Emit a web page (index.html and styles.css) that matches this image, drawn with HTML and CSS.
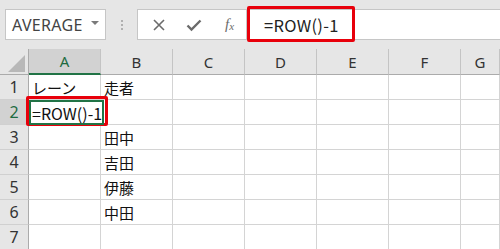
FILE: index.html
```html
<!DOCTYPE html>
<html lang="ja">
<head>
    <meta charset="UTF-8">
    <title>ROW関数</title>
    <link rel="stylesheet" href="styles.css">
</head>
<body>
    <div class="sheet">
        <div class="toolbar">
            <div class="name-box">
                <span class="name-text">AVERAGE</span>
                <span class="name-arrow"></span>
            </div>
            <div class="grip">
                <span></span><span></span><span></span>
            </div>
            <div class="fx-buttons">
                <svg class="icon" width="14" height="14" viewBox="0 0 14 14">
                    <path d="M2 2 L12 12 M12 2 L2 12" stroke="#6b6b6b" stroke-width="1.6" fill="none"/>
                </svg>
                <svg class="icon" width="16" height="14" viewBox="0 0 16 14">
                    <path d="M1.5 7.5 L5.5 11.5 L14.5 2.5" stroke="#6b6b6b" stroke-width="2.4" fill="none"/>
                </svg>
                <span class="fx">f<sub>x</sub></span>
            </div>
            <div class="formula">
                <span class="formula-text">=ROW()-1</span>
            </div>
            <!-- annotation -->
            <div class="mark mark-formula"></div>
        </div>

        <div class="grid">
            <div class="corner"><span class="corner-tri"></span></div>
            <div class="col-head selected">A</div>
            <div class="col-head">B</div>
            <div class="col-head">C</div>
            <div class="col-head">D</div>
            <div class="col-head">E</div>
            <div class="col-head">F</div>
            <div class="col-head">G</div>

            <div class="row-head">1</div>
            <div class="cell">レーン</div>
            <div class="cell">走者</div>
            <div class="cell"></div><div class="cell"></div><div class="cell"></div><div class="cell"></div><div class="cell"></div>

            <div class="row-head selected">2</div>
            <div class="cell active">=ROW()-1<span class="caret"></span></div>
            <div class="cell"></div>
            <div class="cell"></div><div class="cell"></div><div class="cell"></div><div class="cell"></div><div class="cell"></div>

            <div class="row-head">3</div>
            <div class="cell"></div>
            <div class="cell">田中</div>
            <div class="cell"></div><div class="cell"></div><div class="cell"></div><div class="cell"></div><div class="cell"></div>

            <div class="row-head">4</div>
            <div class="cell"></div>
            <div class="cell">吉田</div>
            <div class="cell"></div><div class="cell"></div><div class="cell"></div><div class="cell"></div><div class="cell"></div>

            <div class="row-head">5</div>
            <div class="cell"></div>
            <div class="cell">伊藤</div>
            <div class="cell"></div><div class="cell"></div><div class="cell"></div><div class="cell"></div><div class="cell"></div>

            <div class="row-head">6</div>
            <div class="cell"></div>
            <div class="cell">中田</div>
            <div class="cell"></div><div class="cell"></div><div class="cell"></div><div class="cell"></div><div class="cell"></div>

            <div class="row-head">7</div>
            <div class="cell"></div>
            <div class="cell"></div>
            <div class="cell"></div><div class="cell"></div><div class="cell"></div><div class="cell"></div><div class="cell"></div>
        </div>

        <!-- annotation -->
        <div class="mark mark-cell"></div>
    </div>
</body>
</html>
```

FILE: styles.css
```css
body {
    margin: 0;
    padding: 0;
    background: #fff;
    font-family: 'Noto Sans', 'Noto Sans CJK JP', sans-serif;
    overflow: hidden;
}

.sheet {
    position: relative;
    width: 500px;
    height: 249px;
    overflow: hidden;
}

/* formula bar */

.toolbar {
    position: relative;
    height: 49px;
    box-sizing: border-box;
    padding: 9px 0 0 5px;
    background: #e6e6e6;
    display: flex;
    align-items: flex-start;
}

.name-box {
    width: 101px;
    height: 31px;
    box-sizing: border-box;
    background: #fff;
    border: 1px solid #c6c6c6;
    display: flex;
    align-items: center;
    justify-content: space-between;
    padding: 0 6px 0 6px;
}

.name-text {
    font-size: 16px;
    color: #444;
    letter-spacing: 0.3px;
}

.name-arrow {
    width: 0;
    height: 0;
    border-left: 4px solid transparent;
    border-right: 4px solid transparent;
    border-top: 4px solid #7a7a7a;
    margin-top: -4px;
}

.grip {
    width: 31px;
    height: 31px;
    display: flex;
    flex-direction: column;
    align-items: center;
    justify-content: center;
    gap: 2px;
}

.grip span {
    width: 2px;
    height: 2px;
    background: #b0b0b0;
}

.fx-buttons {
    width: 110px;
    height: 31px;
    box-sizing: border-box;
    background: #fff;
    border: 1px solid #c6c6c6;
    display: flex;
    align-items: center;
    padding-left: 14px;
    gap: 20px;
}

.fx {
    font-family: 'Liberation Serif', serif;
    font-style: italic;
    font-size: 15px;
    color: #6b6b6b;
    margin-left: 3px;
}

.fx sub {
    font-size: 11px;
    vertical-align: -1px;
}

.formula {
    flex: 1;
    height: 31px;
    box-sizing: border-box;
    background: #fff;
    border-top: 1px solid #c6c6c6;
    border-bottom: 1px solid #c6c6c6;
    display: flex;
    align-items: center;
    padding-left: 17px;
}

.formula-text {
    font-family: 'Noto Sans CJK JP', sans-serif;
    font-size: 16.5px;
    letter-spacing: 0.3px;
    color: #222;
}

/* annotation boxes */

.mark {
    position: absolute;
    border: 3px solid #e8000b;
    border-radius: 2px;
    box-sizing: border-box;
}

.mark-formula {
    left: 247px;
    top: 6px;
    width: 108px;
    height: 36px;
}

.mark-cell {
    left: 26px;
    top: 96px;
    width: 82px;
    height: 30px;
}

/* grid */

.grid {
    display: grid;
    grid-template-columns: 29px repeat(6, 72px) 1fr;
    grid-template-rows: 26px;
    grid-auto-rows: 25px;
}

.corner,
.col-head,
.row-head,
.cell {
    box-sizing: border-box;
}

.corner {
    background: #e6e6e6;
    border-right: 1px solid #ababab;
    border-bottom: 1px solid #ababab;
    position: relative;
}

.corner-tri {
    position: absolute;
    right: 3px;
    bottom: 2px;
    width: 0;
    height: 0;
    border-left: 17px solid transparent;
    border-bottom: 17px solid #b8b8b8;
}

.col-head {
    background: #e6e6e6;
    border-right: 1px solid #c4c4c4;
    border-bottom: 1px solid #ababab;
    display: flex;
    align-items: center;
    justify-content: center;
    font-size: 15px;
    color: #333;
}

.col-head.selected {
    background: #d2d2d2;
    border-bottom: 2px solid #217346;
    color: #1e6b41;
}

.row-head {
    background: #e6e6e6;
    border-right: 1px solid #ababab;
    border-bottom: 1px solid #d0d0d0;
    display: flex;
    align-items: center;
    justify-content: center;
    font-size: 16px;
    color: #333;
}

.row-head.selected {
    background: #d2d2d2;
    color: #1e6b41;
}

.cell {
    border-right: 1px solid #d4d4d4;
    border-bottom: 1px solid #d4d4d4;
    font-family: 'Noto Sans CJK JP', sans-serif;
    font-size: 15px;
    color: #111;
    padding: 0 3px;
    display: flex;
    align-items: center;
    white-space: nowrap;
}

.cell.active {
    position: relative;
    border: 2px solid #217346;
    padding: 0 1px;
    font-size: 16px;
    overflow: visible;
    z-index: 1;
    background: #fff;
    margin-right: -3px;
}

.caret {
    width: 1px;
    height: 19px;
    background: #000;
    margin-left: 1px;
}
```
